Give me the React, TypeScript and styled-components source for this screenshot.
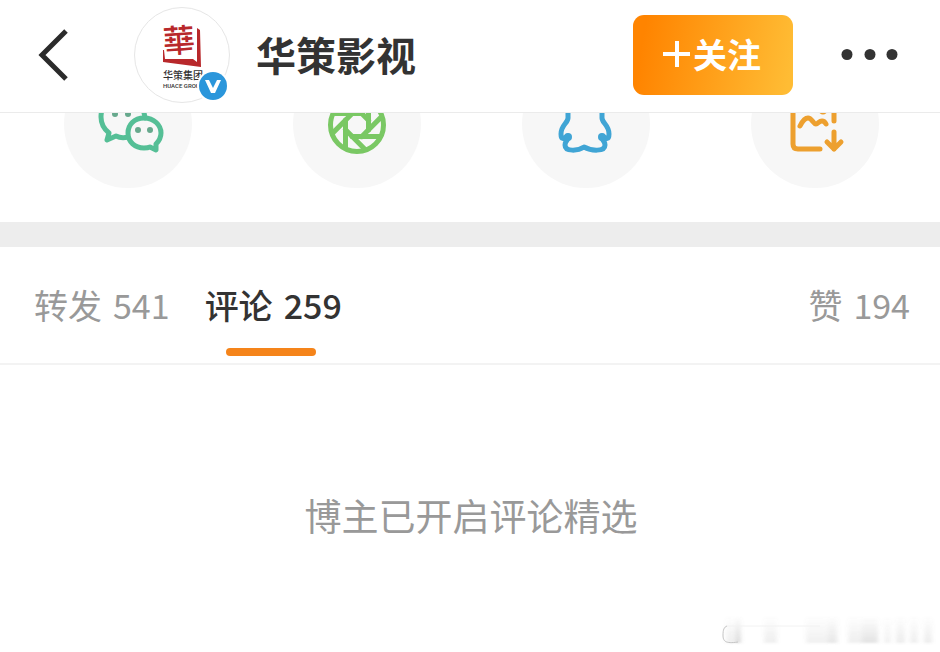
import React from "react";
import styled, { createGlobalStyle } from "styled-components";

const GlobalStyle = createGlobalStyle`
  * { box-sizing: border-box; }
  body {
    margin: 0;
    background: #fff;
    color: #333;
    font-family: "Noto Sans CJK SC", "Noto Sans", sans-serif;
  }
`;

const Page = styled.div`
  min-height: 100vh;
  display: flex;
  flex-direction: column;
`;

const PlainButton = styled.button`
  padding: 0;
  border: 0;
  background: none;
  font-family: inherit;
  cursor: pointer;
`;

const Header = styled.header`
  display: flex;
  align-items: center;
  height: 113px;
  padding: 0 36px 2px 32px;
  border-bottom: 1px solid #ebebeb;
`;

const IconButton = styled(PlainButton)`
  display: flex;
  align-items: center;
  justify-content: center;
  width: 68px;
  height: 64px;
`;

const BackButton = styled(IconButton)`
  width: 40px;
`;

const Avatar = styled.div`
  position: relative;
  flex: none;
  width: 96px;
  height: 96px;
  margin-left: 62px;
  border: 1px solid #e6e6e6;
  border-radius: 50%;
`;

const AvatarLogo = styled.svg`
  display: block;
  width: 94px;
  height: 94px;
  border-radius: 50%;
`;

const Verified = styled.svg`
  position: absolute;
  right: 0;
  bottom: 0;
  width: 32px;
  height: 32px;
`;

const Name = styled.h1`
  flex: 1;
  margin: 0 0 0 26px;
  padding-bottom: 2px;
  font-size: 40px;
  line-height: 56px;
  font-weight: 700;
  white-space: nowrap;
`;

const FollowButton = styled(PlainButton)`
  display: flex;
  align-items: center;
  justify-content: center;
  gap: 2px;
  width: 160px;
  height: 80px;
  margin-right: 43px;
  padding: 0 2px 2px 0;
  border-radius: 11px;
  background: linear-gradient(100deg, #ff8400 8%, #ffbc34 96%);
  color: #fff;
  font-size: 34px;
  line-height: 48px;
  font-weight: 700;
`;

const ShareRow = styled.nav`
  display: flex;
  justify-content: space-between;
  align-items: flex-end;
  height: 109px;
  padding: 0 61px 34px 64px;
  overflow: hidden;
`;

const ShareButton = styled(PlainButton)<{ $tint: string }>`
  flex: none;
  width: 128px;
  height: 128px;
  border-radius: 50%;
  background: #f7f7f7;
  color: ${(p) => p.$tint};

  svg {
    display: block;
    width: 128px;
    height: 128px;
    fill: none;
    stroke: currentColor;
    stroke-width: 5;
    stroke-linecap: round;
    stroke-linejoin: round;
  }
`;

const Divider = styled.div`
  height: 25px;
  background: #ededed;
`;

const Tabs = styled.div`
  display: flex;
  gap: 35px;
  height: 118px;
  padding: 0 30px 0 34px;
  border-bottom: 2px solid #f3f3f3;
`;

const Tab = styled(PlainButton)<{ $active?: boolean; $end?: boolean }>`
  position: relative;
  display: flex;
  align-items: center;
  gap: 11px;
  margin-left: ${(p) => (p.$end ? "auto" : "0")};
  color: ${(p) => (p.$active ? "#333" : "#999")};
  font-size: 34px;
  line-height: 48px;
  font-weight: ${(p) => (p.$active ? 500 : 400)};
  white-space: nowrap;

  &::after {
    content: "";
    display: ${(p) => (p.$active ? "block" : "none")};
    position: absolute;
    left: 21px;
    bottom: 7px;
    width: 90px;
    height: 8px;
    border-radius: 4px;
    background: #f5841a;
  }
`;

const Empty = styled.main`
  position: relative;
  flex: 1;
  padding: 122px 0 80px 2px;
  color: #999;
  font-size: 37px;
  line-height: 56px;
  text-align: center;

  p { margin: 0; }
`;

const Smudge = styled.svg`
  position: absolute;
  right: 4px;
  bottom: 0;
  width: 216px;
  height: 36px;
`;

const BLADES = [0, 45, 90, 135, 180, 225, 270, 315];

const WeChatIcon = () => (
  <svg viewBox="0 0 128 128" aria-hidden="true">
    <path d="M81 58C79 43 71 35 60 35C47 35 37 44 37 57C37 64 40 69 45 73L43 80L52 76C56 78 60 78 64 77" />
    <path d="M92 84C95 81 97 78 97 73C97 65 90 58 80 58C70 58 64 65 64 73C64 82 71 88 80 88C82 88 84 88 86 87L92 90Z" />
    <g fill="#67a98d" stroke="none">
      <circle cx="51" cy="54" r="3" />
      <circle cx="64" cy="54" r="3" />
      <circle cx="74" cy="70" r="3" />
      <circle cx="86" cy="70" r="3" />
    </g>
  </svg>
);

const MomentsIcon = () => (
  <svg viewBox="0 0 128 128" aria-hidden="true">
    <circle cx="64" cy="65" r="26.500" />
    {BLADES.map((angle) => (
      <path key={angle} d="M52.500 60V88" transform={`rotate(${angle} 64 65)`} />
    ))}
  </svg>
);

const QQIcon = () => (
  <svg viewBox="0 0 128 128" aria-hidden="true">
    <path d="M46 53V58C46 63 39 65 39 74C39 80 41 79 46 76C48 79 43 80 43 85C43 92 56 91 62 87C69 91 83 92 83 85C83 80 78 79 80 76C85 79 87 80 87 74C87 65 80 63 80 58V53C80 24 46 24 46 53Z" />
    <g fill="currentColor" stroke="none">
      <circle cx="46" cy="77" r="4" />
      <circle cx="80" cy="77" r="4" />
    </g>
  </svg>
);

const PictureIcon = () => (
  <svg viewBox="0 0 128 128" aria-hidden="true">
    <path d="M83 61V42Q83 37 78 37H47Q42 37 42 42V84Q42 89 47 89H69" />
    <path d="M49 66C52 60 55 58 57 58C61 58 62 64 65 64C67 64 68 61 71 61C73 61 74 62 75 64" />
    <circle cx="72" cy="50" r="2" />
    <path d="M83 72V89M76 82L83 89L90 82" />
  </svg>
);

const SHARES = [
  { label: "微信", tint: "#55bf96", Icon: WeChatIcon },
  { label: "朋友圈", tint: "#7ac864", Icon: MomentsIcon },
  { label: "QQ", tint: "#40a5d5", Icon: QQIcon },
  { label: "生成长图", tint: "#eda02f", Icon: PictureIcon },
];

const TABS = [
  { label: "转发", count: 541 },
  { label: "评论", count: 259, active: true },
  { label: "赞", count: 194, end: true },
];

const STREAKS = [
  [6, 14, 0.12], [16, 5, 0.2], [44, 13, 0.12], [86, 32, 0.11], [108, 8, 0.08],
  [128, 30, 0.12], [142, 16, 0.09], [164, 7, 0.1], [176, 9, 0.14], [190, 8, 0.12], [204, 8, 0.14],
];

export default function App() {
  return (
    <Page>
      <GlobalStyle />
      <Header>
        <BackButton aria-label="返回">
          <svg width="40" height="56" viewBox="0 0 40 56" fill="none" stroke="#2b2b2b" strokeWidth="5" aria-hidden="true">
            <path d="M34 4L10 28L34 52" />
          </svg>
        </BackButton>
        <Avatar>
          <AvatarLogo viewBox="0 0 94 94" role="img" aria-label="华策集团">
            <g transform="rotate(-4 45 34)">
              <text x="44" y="44" textAnchor="middle" fill="#b8282b" fontSize="32" fontWeight="500" fontFamily="'Noto Sans CJK TC', sans-serif">華</text>
            </g>
            <path d="M28 42L29 42L30 51L58 51L62 54L62 20L65 22L66 59L28 54Z" fill="#b8282b" />
            <text x="28" y="71" fill="#333" fontSize="10" fontWeight="500">华策集团</text>
            <text x="28" y="80" fill="#333" fontSize="6" fontWeight="500" fontFamily="Roboto, sans-serif">HUACE GROUP</text>
          </AvatarLogo>
          <Verified viewBox="0 0 32 32" role="img" aria-label="已认证">
            <circle cx="16" cy="16" r="16" fill="#fff" />
            <circle cx="16" cy="16" r="14" fill="#2b96db" />
            <path d="M8 10H12L16 18L20 10H24L18 23H14Z" fill="#fff" />
          </Verified>
        </Avatar>
        <Name>华策影视</Name>
        <FollowButton>
          <svg width="28" height="28" viewBox="0 0 28 28" stroke="#fff" strokeWidth="4" aria-hidden="true">
            <path d="M0 14H27M14 1V27" />
          </svg>
          关注
        </FollowButton>
        <IconButton aria-label="更多">
          <svg width="60" height="12" viewBox="0 0 60 12" fill="#333" aria-hidden="true">
            <circle cx="7" cy="5.500" r="5.500" />
            <circle cx="30" cy="5.500" r="5.500" />
            <circle cx="52" cy="5.500" r="5.500" />
          </svg>
        </IconButton>
      </Header>
      <ShareRow aria-label="分享">
        {SHARES.map(({ label, tint, Icon }) => (
          <ShareButton key={label} $tint={tint} aria-label={label}>
            <Icon />
          </ShareButton>
        ))}
      </ShareRow>
      <Divider />
      <Tabs role="tablist">
        {TABS.map(({ label, count, active, end }) => (
          <Tab key={label} role="tab" aria-selected={!!active} $active={active} $end={end}>
            <span>{label}</span>
            <span>{count}</span>
          </Tab>
        ))}
      </Tabs>
      <Empty>
        <p>博主已开启评论精选</p>
        <Smudge viewBox="0 0 216 36" aria-hidden="true">
          <defs>
            <linearGradient id="streak" x1="0" y1="0" x2="0" y2="1">
              <stop offset="0" stopColor="#777" stopOpacity="0" />
              <stop offset="1" stopColor="#777" />
            </linearGradient>
            <filter id="soften">
              <feGaussianBlur stdDeviation="2 1" />
            </filter>
          </defs>
          <g filter="url(#soften)">
            {STREAKS.map(([x, width, opacity]) => (
              <rect key={x} x={x} y="0" width={width} height="27" fill="url(#streak)" opacity={opacity} />
            ))}
          </g>
          <path d="M18 26C5 28 3 25 3 19C3 14 4 11 7 10" fill="none" stroke="#c4c4c4" />
          <path d="M7 10H100" fill="none" stroke="#f2f2f2" />
        </Smudge>
      </Empty>
    </Page>
  );
}
